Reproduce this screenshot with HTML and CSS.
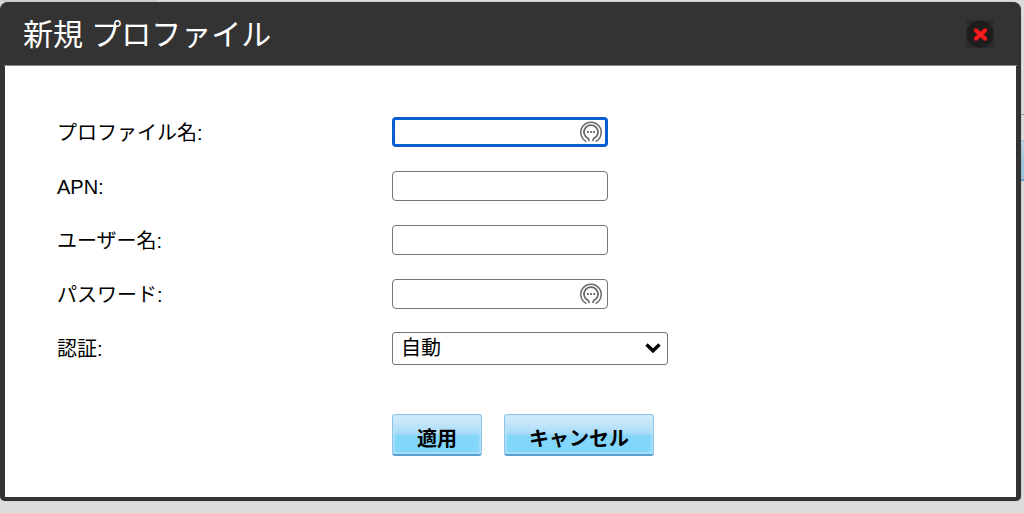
FILE: index.html
```html
<!DOCTYPE html>
<html lang="ja">
<head>
  <meta charset="UTF-8">
  <meta name="viewport" content="width=device-width, initial-scale=1.0">
  <title>新規 プロファイル</title>
  <link rel="stylesheet" href="styles.css">
</head>
<body>
  <!-- Dimmed page behind the dialog -->
  <div class="backdrop">
    <div class="backdrop-tab"></div>
    <div class="backdrop-line"></div>
    <div class="backdrop-button"></div>
  </div>

  <main class="dialog" role="dialog" aria-labelledby="dialog-title">
    <header class="dialog-header">
      <h1 id="dialog-title">新規 プロファイル</h1>
      <button type="button" class="close" aria-label="閉じる">
        <svg width="28" height="28" viewBox="0 0 28 28">
          <rect width="28" height="28" fill="#2c2c2c"/>
          <circle cx="14" cy="14" r="13.5" fill="#1d1d1d"/>
          <path d="M10 10.5l9 8M19 10.5l-9 8" stroke="#a01515" stroke-width="5" stroke-linecap="round"/>
          <path d="M10 10.5l9 8M19 10.5l-9 8" stroke="#fa1c1c" stroke-width="3.2" stroke-linecap="round"/>
        </svg>
      </button>
    </header>
    <form class="form" onsubmit="return false">
      <div class="row">
        <label for="profile-name">プロファイル名:</label>
        <div class="field">
          <input type="text" id="profile-name" autocomplete="off" autofocus>
          <svg class="key-icon" width="24" height="24" viewBox="0 0 24 24" fill="none" stroke="#6a6a6a">
            <path d="M7.4 21.6A10.2 10.2 0 1 1 16.6 21.6" stroke-width="1.5"/>
            <path d="M10.2 21L9.4 18.6A7 7 0 1 1 14.6 18.6L13.8 21" stroke-width="1.7"/>
            <path d="M8 12h1.8M11.1 12h1.8M14.2 12h1.8" stroke-width="2"/>
          </svg>
        </div>
      </div>
      <div class="row">
        <label for="apn">APN:</label>
        <div class="field">
          <input type="text" id="apn" autocomplete="off">
        </div>
      </div>
      <div class="row">
        <label for="user-name">ユーザー名:</label>
        <div class="field">
          <input type="text" id="user-name" autocomplete="off">
        </div>
      </div>
      <div class="row">
        <label for="password">パスワード:</label>
        <div class="field">
          <input type="password" id="password" autocomplete="off">
          <svg class="key-icon" width="24" height="24" viewBox="0 0 24 24" fill="none" stroke="#6a6a6a">
            <path d="M7.4 21.6A10.2 10.2 0 1 1 16.6 21.6" stroke-width="1.5"/>
            <path d="M10.2 21L9.4 18.6A7 7 0 1 1 14.6 18.6L13.8 21" stroke-width="1.7"/>
            <path d="M8 12h1.8M11.1 12h1.8M14.2 12h1.8" stroke-width="2"/>
          </svg>
        </div>
      </div>
      <div class="row">
        <label for="auth">認証:</label>
        <div class="select">
          <select id="auth">
            <option>自動</option>
          </select>
          <svg class="arrow" width="16" height="12" viewBox="0 0 16 12" fill="none" stroke="#000">
            <path d="M1.5 2.5L8 8.8L14.5 2.5" stroke-width="3.4"/>
          </svg>
        </div>
      </div>
      <div class="buttons">
        <button type="submit" class="btn">適用</button>
        <button type="button" class="btn">キャンセル</button>
      </div>
    </form>
  </main>
</body>
</html>
```
FILE: styles.css
```css
* {
  box-sizing: border-box;
}
body {
  margin: 0;
  padding: 2px 3px 12px 0;
  font-family: "Liberation Sans", "Noto Sans CJK JP", sans-serif;
  font-size: 20px;
  line-height: 30px;
  color: #000;
  background-color: #dcdcdc;
}
.backdrop {
  position: absolute;
  top: 0;
  right: 0;
  left: 0;
  height: 200px;
  overflow: hidden;
}
.backdrop-tab {
  position: absolute;
  top: 0;
  left: 0;
  width: 158px;
  height: 2px;
  background-color: #cfcfcf;
}
.backdrop-line {
  position: absolute;
  top: 114px;
  right: 0;
  width: 8px;
  height: 1px;
  background-color: #999;
}
.backdrop-button {
  position: absolute;
  top: 140px;
  right: 0;
  width: 8px;
  height: 41px;
  border-top: 1px solid #a5bfd0;
  border-bottom: 2px solid #6f9dbd;
  background: linear-gradient(#c6d3dc, #9cc6dc 60%);
}
.dialog {
  position: relative;
  border: 5px solid #333;
  border-width: 0 5px 4px;
  border-radius: 8px 8px 5px 5px;
  background-color: #fff;
  box-shadow: 0 0 1px #777;
}
.dialog-header {
  display: flex;
  align-items: center;
  justify-content: space-between;
  height: 64px;
  margin: 0 -1px;
  padding: 0 23px 0 19px;
  border-bottom: 1px solid #888;
  border-radius: 4px 4px 0 0;
  background-color: #333;
}
.dialog-header h1 {
  margin: 0;
  padding-top: 2px;
  font-size: 30px;
  font-weight: normal;
  color: #fff;
}
.close {
  width: 28px;
  height: 28px;
  padding: 0;
  border: none;
  background: none;
  cursor: pointer;
}
.close svg {
  display: block;
}
.form {
  display: flex;
  flex-direction: column;
  gap: 24px;
  padding: 51px 52px 41px;
}
.row {
  display: flex;
  align-items: center;
  height: 30px;
}
.row label {
  width: 335px;
  padding-top: 1px;
}
.field {
  position: relative;
  width: 216px;
}
.field input {
  display: block;
  width: 100%;
  height: 30px;
  padding: 2px 32px 2px 6px;
  border: 1px solid #767676;
  border-radius: 4px;
  font: inherit;
  background-color: #fff;
  caret-color: transparent;
}
.field input:focus {
  border: 3px solid #0a5fd0;
  outline: none;
}
.key-icon {
  position: absolute;
  top: 3px;
  right: 5px;
}
.select {
  position: relative;
  width: 276px;
}
.select select {
  display: block;
  width: 100%;
  height: 33px;
  padding: 0 32px 3px 8px;
  border: 1px solid #767676;
  border-radius: 3px;
  appearance: none;
  font: inherit;
  color: #000;
  background-color: #fff;
}
.arrow {
  position: absolute;
  top: 10px;
  right: 7px;
  pointer-events: none;
}
.buttons {
  display: flex;
  gap: 22px;
  margin: 27px 0 0 335px;
}
.btn {
  height: 42px;
  padding: 8px 24px 0;
  border: 1px solid #8fc3e6;
  border-bottom: 2px solid #5a9fd0;
  border-radius: 3px;
  font: inherit;
  font-weight: bold;
  color: #000;
  background: linear-gradient(#d6effc, #acdcf8 45%, #82d5fb 55%, #82d5fb);
  box-shadow: inset 0 0 3px 1px #c4e8fb;
  cursor: pointer;
}
```
